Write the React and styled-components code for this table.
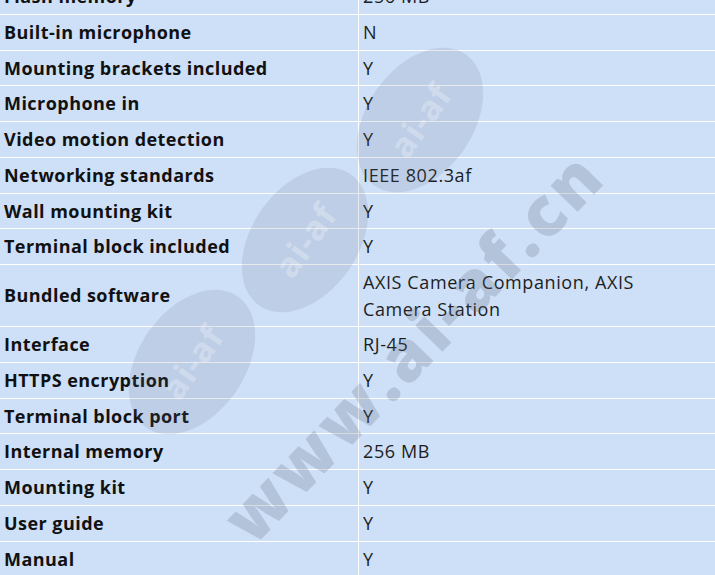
import styled, { createGlobalStyle } from "styled-components";

const GlobalStyle = createGlobalStyle`
  html, body {
    margin: 0;
    padding: 0;
    background: #cee0f8;
    overflow: hidden;
  }
`;

const Page = styled.div`
  position: relative;
  width: 715px;
  height: 575px;
  overflow: hidden;
  background: #cee0f8;
`;

const SpecTable = styled.div`
  margin-top: -20.7px;
  display: grid;
  grid-template-columns: 359px 1fr;
  font-family: "Open Sans", "Noto Sans", Arial, sans-serif;
  font-size: 18px;
  line-height: 26.7px;
`;

const Label = styled.div`
  box-sizing: border-box;
  padding: 4px 4px;
  border-right: 1px solid #ffffff;
  border-bottom: 1px solid #ffffff;
  color: #111111;
  font-weight: 700;
  letter-spacing: 0.45px;
  display: flex;
  align-items: center;
`;

const Value = styled.div`
  box-sizing: border-box;
  padding: 4px 4px;
  padding-right: ${(p) => (p.$narrow ? "50px" : "4px")};
  border-bottom: 1px solid #ffffff;
  color: #1d1d1d;
  font-weight: 400;
  letter-spacing: 0.6px;
`;

const Watermark = styled.div`
  position: absolute;
  inset: 0;
  pointer-events: none;
`;

const Badge = styled.div`
  position: absolute;
  width: 160px;
  height: 106px;
  border-radius: 50%;
  background: rgba(95, 105, 125, 0.15);
  transform: translate(-50%, -50%) rotate(-55deg);
  display: flex;
  align-items: center;
  justify-content: center;
  font-family: "Open Sans", Arial, sans-serif;
  font-weight: 700;
  font-size: 34px;
  letter-spacing: 1px;
  color: rgba(255, 255, 255, 0.3);
`;

const SiteMark = styled.div`
  position: absolute;
  left: 412px;
  top: 345px;
  transform: translate(-50%, -50%) rotate(-46deg);
  white-space: nowrap;
  font-family: "Open Sans", Arial, sans-serif;
  font-weight: 800;
  font-size: 68px;
  letter-spacing: 4px;
  color: rgba(95, 105, 125, 0.24);
`;

const specs = [
  ["Flash memory", "256 MB"],
  ["Built-in microphone", "N"],
  ["Mounting brackets included", "Y"],
  ["Microphone in", "Y"],
  ["Video motion detection", "Y"],
  ["Networking standards", "IEEE 802.3af"],
  ["Wall mounting kit", "Y"],
  ["Terminal block included", "Y"],
  ["Bundled software", "AXIS Camera Companion, AXIS Camera Station", true],
  ["Interface", "RJ-45"],
  ["HTTPS encryption", "Y"],
  ["Terminal block port", "Y"],
  ["Internal memory", "256 MB"],
  ["Mounting kit", "Y"],
  ["User guide", "Y"],
  ["Manual", "Y"],
];

const badges = [
  [420, 120],
  [305, 240],
  [192, 362],
];

export default function App() {
  return (
    <>
      <GlobalStyle />
      <Page>
        <SpecTable>
          {specs.map(([name, value, narrow]) => (
            <>
              <Label key={name}>{name}</Label>
              <Value key={name + "-v"} $narrow={narrow}>
                {value}
              </Value>
            </>
          ))}
        </SpecTable>
        <Watermark>
          {badges.map(([x, y]) => (
            <Badge key={x} style={{ left: x, top: y }}>
              ai-af
            </Badge>
          ))}
          <SiteMark>www.ai-af.cn</SiteMark>
        </Watermark>
      </Page>
    </>
  );
}
